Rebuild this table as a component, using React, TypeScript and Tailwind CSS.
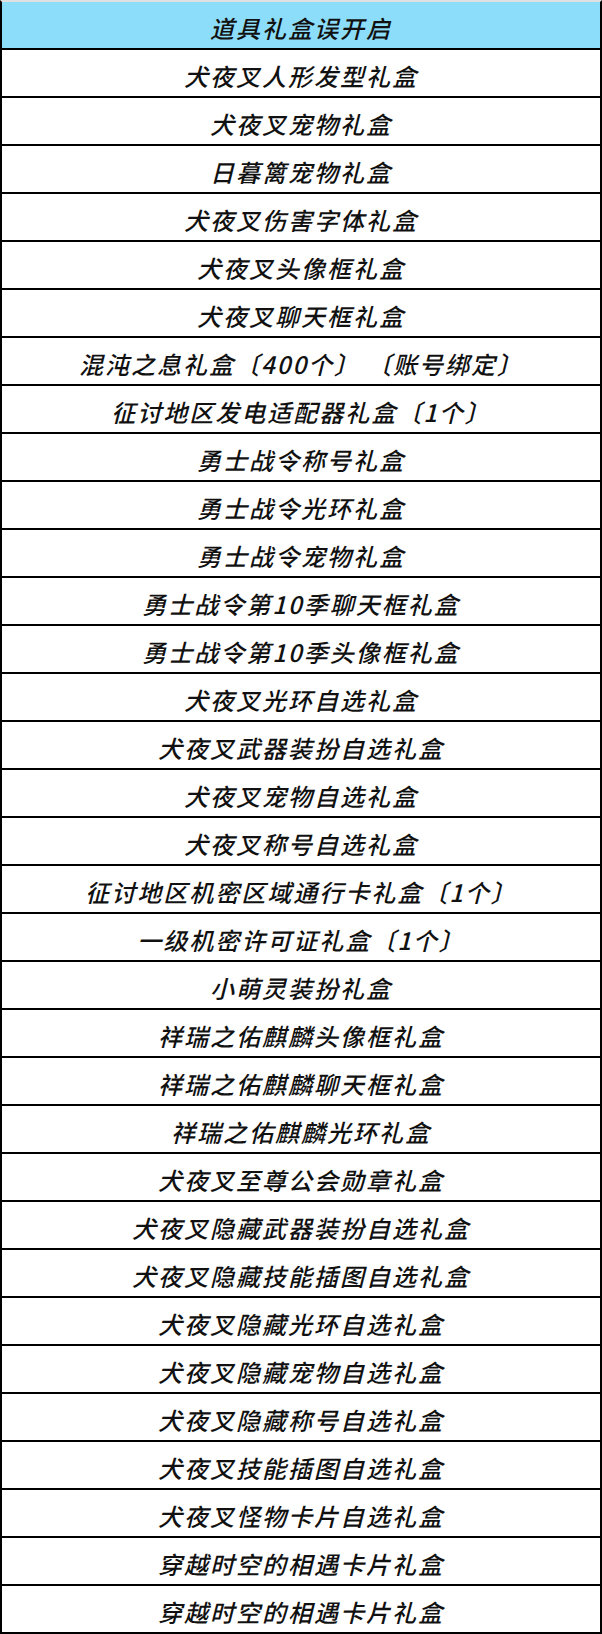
import React from 'react';

const items: string[] = [
  '犬夜叉人形发型礼盒',
  '犬夜叉宠物礼盒',
  '日暮篱宠物礼盒',
  '犬夜叉伤害字体礼盒',
  '犬夜叉头像框礼盒',
  '犬夜叉聊天框礼盒',
  '混沌之息礼盒〔400个〕\u2009〔账号绑定〕',
  '征讨地区发电适配器礼盒〔1个〕',
  '勇士战令称号礼盒',
  '勇士战令光环礼盒',
  '勇士战令宠物礼盒',
  '勇士战令第10季聊天框礼盒',
  '勇士战令第10季头像框礼盒',
  '犬夜叉光环自选礼盒',
  '犬夜叉武器装扮自选礼盒',
  '犬夜叉宠物自选礼盒',
  '犬夜叉称号自选礼盒',
  '征讨地区机密区域通行卡礼盒〔1个〕',
  '一级机密许可证礼盒〔1个〕',
  '小萌灵装扮礼盒',
  '祥瑞之佑麒麟头像框礼盒',
  '祥瑞之佑麒麟聊天框礼盒',
  '祥瑞之佑麒麟光环礼盒',
  '犬夜叉至尊公会勋章礼盒',
  '犬夜叉隐藏武器装扮自选礼盒',
  '犬夜叉隐藏技能插图自选礼盒',
  '犬夜叉隐藏光环自选礼盒',
  '犬夜叉隐藏宠物自选礼盒',
  '犬夜叉隐藏称号自选礼盒',
  '犬夜叉技能插图自选礼盒',
  '犬夜叉怪物卡片自选礼盒',
  '穿越时空的相遇卡片礼盒',
  '穿越时空的相遇卡片礼盒',
];

const Row: React.FC<{ text: string; header?: boolean }> = ({ text, header }) => (
  <div
    className={`h-12 border-b-2 border-black flex items-center justify-center pt-[5px] ${
      header ? 'bg-[#8cddfa]' : 'bg-white'
    }`}
  >
    <span className="italic font-medium text-[24px] leading-none tracking-[2px] text-[#111] whitespace-pre">
      {text}
    </span>
  </div>
);

export default function App() {
  return (
    <div
      className="w-[602px] border-t-2 border-t-[#e0e0e0] border-x-2 border-x-black bg-white"
      style={{ fontFamily: '"Noto Sans CJK SC", "Noto Sans", sans-serif' }}
    >
      <Row text="道具礼盒误开启" header />
      {items.map((t, i) => (
        <Row key={i} text={t} />
      ))}
    </div>
  );
}
